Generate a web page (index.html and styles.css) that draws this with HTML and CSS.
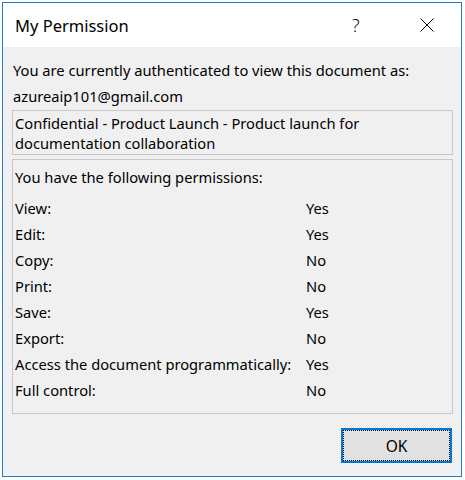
FILE: index.html
```html
<!DOCTYPE html>
<html>
<head>
<meta charset="utf-8">
<link rel="stylesheet" href="styles.css">
</head>
<body>
<div class="window">
  <div class="titlebar">
    <span class="title">My Permission</span>
    <span class="help">?</span>
    <span class="close">
      <svg width="16" height="16" viewBox="0 0 16 16"><path d="M1.5 1.5 L14.5 14.5 M14.5 1.5 L1.5 14.5" stroke="#000" stroke-width="1" fill="none"/></svg>
    </span>
  </div>
  <div class="content">
    <div class="intro">You are currently authenticated to view this document as:</div>
    <div class="intro">azureaip101@gmail.com</div>
    <div class="box label-box">Confidential - Product Launch - Product launch for documentation collaboration</div>
    <div class="box perms">
      <div class="perms-head">You have the following permissions:</div>
      <div class="grid">
        <span>View:</span><span>Yes</span>
        <span>Edit:</span><span>Yes</span>
        <span>Copy:</span><span>No</span>
        <span>Print:</span><span>No</span>
        <span>Save:</span><span>Yes</span>
        <span>Export:</span><span>No</span>
        <span>Access the document programmatically:</span><span>Yes</span>
        <span>Full control:</span><span>No</span>
      </div>
    </div>
    <div class="actions">
      <button class="ok">OK</button>
    </div>
  </div>
</div>
</body>
</html>
```
FILE: styles.css
```css
html, body {
  margin: 0;
  padding: 0;
  background: #ffffff;
}
body {
  font-family: "Noto Sans", "Open Sans", sans-serif;
  font-size: 14.7px;
  color: #000;
}
.window {
  margin: 2px 0 0 2px;
  width: 460px;
  height: 475px;
  box-sizing: border-box;
  border: 1px solid #1f7acb;
  background: #f0f0f0;
  display: flex;
  flex-direction: column;
}
.titlebar {
  height: 44px;
  flex: none;
  background: #fff;
  display: flex;
  align-items: center;
  padding-left: 12px;
}
.title {
  font-size: 16.5px;
  flex: 1;
}
.help {
  font-size: 18px;
  font-weight: 300;
  width: 20px;
  margin-right: 47px;
  color: #111;
}
.close {
  width: 16px;
  height: 16px;
  margin-right: 26px;
  display: flex;
}
.content {
  flex: 1;
  padding: 10px 8px 0 9px;
  display: flex;
  flex-direction: column;
}
.intro {
  line-height: 26px;
  padding-left: 1px;
}
.box {
  border: 1px solid #c8c8c8;
}
.label-box {
  margin-top: 1px;
  line-height: 20px;
  padding: 2px 40px 1px 2px;
}
.perms {
  margin-top: 4px;
  padding: 4px 2px 10px 2px;
}
.perms-head {
  line-height: 26px;
  margin-bottom: 5px;
}
.grid {
  display: grid;
  grid-template-columns: 291px auto;
  line-height: 26px;
}
.actions {
  display: flex;
  justify-content: flex-end;
  padding: 14px 1px 0 0;
}
.ok {
  width: 111px;
  height: 35px;
  border: 2px solid #0078d7;
  background: #e1e1e1;
  font-family: inherit;
  font-size: 15.5px;
  color: #000;
  padding: 0;
  outline: 1px dotted #000;
  outline-offset: -3px;
}
```
